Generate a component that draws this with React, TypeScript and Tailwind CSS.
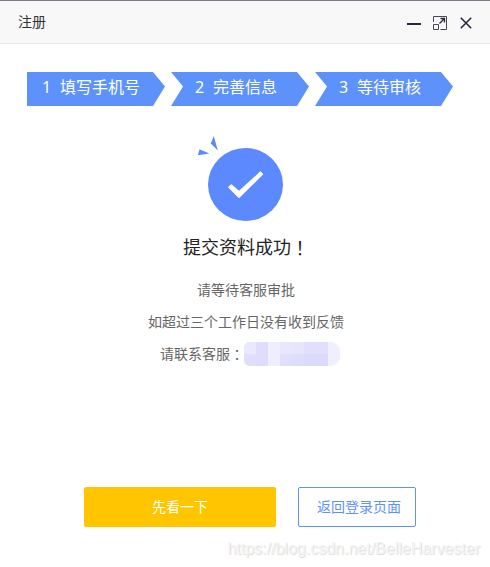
import React from 'react';

type Step = { n: number; label: string; first?: boolean };

const steps: Step[] = [
  { n: 1, label: '填写手机号', first: true },
  { n: 2, label: '完善信息' },
  { n: 3, label: '等待审核' },
];

function StepArrow({ n, label, first }: Step) {
  const shape = first
    ? 'pl-[15px] [clip-path:polygon(0_0,126px_0,138px_14.5px,126px_34px,0_34px)]'
    : 'pl-6 [clip-path:polygon(0_0,126px_0,138px_14.5px,126px_34px,0_34px,12px_14.5px)]';
  return (
    <li className={`flex h-[34px] w-[138px] bg-[#5e92fb] text-base leading-[31px] text-white ${shape}`}>
      <span className="w-[18px] shrink-0">{n}</span>
      <span className="whitespace-nowrap">{label}</span>
    </li>
  );
}

function TitleBar() {
  return (
    <header className="flex h-11 items-center justify-between border-t border-b border-t-[#7a7a88] border-b-[#ececec] bg-[#f8f8f8] pr-[18px] pl-[18px]">
      <h1 className="text-sm leading-5 text-[#333]">注册</h1>
      <div className="flex items-center text-[#2b2839]">
        <button aria-label="最小化" className="mr-3 flex h-4 w-[14px] items-center pt-[3px]">
          <span className="h-[2px] w-full bg-[#2b2839]" />
        </button>
        <button aria-label="最大化" className="mr-[13px] pt-[2px]">
          <svg width="14" height="14" viewBox="0 0 14 14" fill="none" stroke="currentColor">
            <path d="M.5 6V.5h13v13H7.5M.5 8.5h5v5h-5z" strokeWidth="1" stroke="#4a4858" />
            <path d="M6.5 7.5l5-5M7.5 2.5h4V6.5" strokeWidth="1.3" />
          </svg>
        </button>
        <button aria-label="关闭" className="pt-[2px]">
          <svg width="12" height="12" viewBox="0 0 12 12" fill="none" stroke="currentColor" strokeWidth="1.6">
            <path d="M.8.8l10.4 10.4M11.2.8L.8 11.2" />
          </svg>
        </button>
      </div>
    </header>
  );
}

function SuccessMark() {
  return (
    <svg className="mr-3 block" width="86" height="86" viewBox="0 0 86 86" fill="#5d89fe">
      <ellipse cx="48.5" cy="48.5" rx="37.5" ry="36.5" />
      <path d="M16.8 0l4 14.5-7-7zM2.5 13.3l9.8 4.2L.9 19.2z" />
      <path
        d="M34.3 49.2L42 55.9 63.6 36.2 65.3 38.2 42 61.2 32 51.3z"
        fill="#fff"
        stroke="#fff"
        strokeWidth="1.6"
        strokeLinejoin="round"
      />
    </svg>
  );
}

function MaskedContact() {
  return (
    <span className="flex h-6 w-[96px] overflow-hidden rounded-l-md rounded-r-[10px] bg-[#f0eefe]">
      <span className="h-full w-3 bg-[#e0ddfe]"><span className="block h-3 bg-[#e9e8fe]" /></span>
      <span className="h-full w-3 bg-[#dfdcfe]" />
      <span className="h-full w-3 bg-[#eeeefe]" />
      <span className="h-full w-3 bg-[#e1dffe]"><span className="block h-3 bg-[#e8e7fe]" /></span>
      <span className="h-full w-3 bg-[#dfddfe]"><span className="block h-3 bg-[#e7e4fe]" /></span>
      <span className="h-full w-6 bg-[#dcd9fe]"><span className="block h-3 bg-[#e1defe]" /></span>
      <span className="h-full w-3 bg-[#f0effe]" />
    </span>
  );
}

export default function App() {
  return (
    <div className="relative flex h-[567px] w-[490px] flex-col overflow-hidden bg-white font-['Noto_Sans','Noto_Sans_CJK_SC',sans-serif]">
      <TitleBar />
      <ol className="flex gap-[6px] pt-7 pl-[27px]">
        {steps.map((s) => (
          <StepArrow key={s.n} {...s} />
        ))}
      </ol>
      <main className="flex flex-col items-center pt-[30px] pl-[2px]">
        <SuccessMark />
        <h2 className="mt-[11px] flex text-lg leading-7 text-[#222]">
          提交资料成功
          <span lang="zh-TW" className="font-['Noto_Sans_CJK_TC',sans-serif]">！</span>
        </h2>
        <div className="mt-[13px] flex flex-col items-center text-sm leading-8 text-[#666]">
          <p>请等待客服审批</p>
          <p>如超过三个工作日没有收到反馈</p>
          <p className="flex items-center pl-[8px]">
            请联系客服
            <span lang="zh-TW" className="font-['Noto_Sans_CJK_TC',sans-serif]">：</span>
            <MaskedContact />
          </p>
        </div>
      </main>
      <footer className="mt-[117px] flex gap-[22px] pl-[84px] text-sm">
        <button className="h-10 w-48 rounded-[2px] bg-[#ffc600] text-white">先看一下</button>
        <button className="h-10 w-[118px] rounded-[2px] border border-[#5e92fb] pl-[4px] text-[#5e92fb]">返回登录页面</button>
      </footer>
      <p className="absolute right-[10px] bottom-[6px] font-['Liberation_Sans',sans-serif] text-base leading-6 text-[#f4f4f4] [text-shadow:1px_1px_1px_#dadada]">
        https://blog.csdn.net/BelleHarvester
      </p>
    </div>
  );
}
